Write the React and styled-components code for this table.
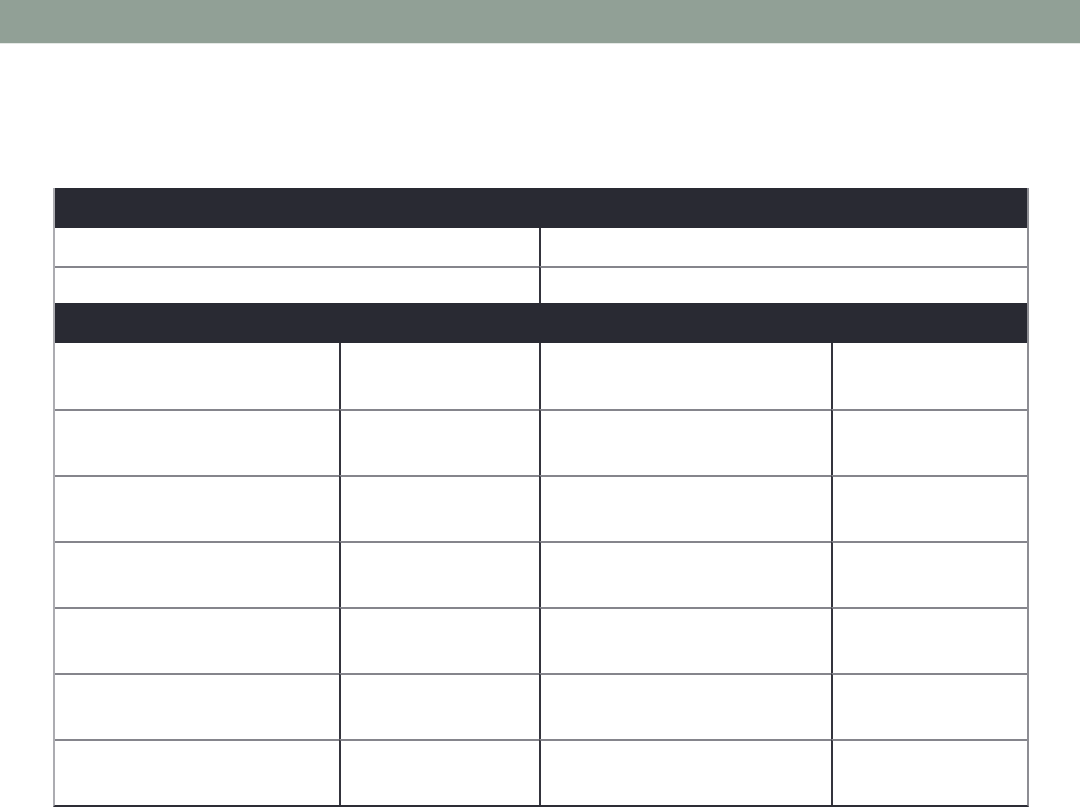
import React from 'react';
import styled, { createGlobalStyle } from 'styled-components';

const GlobalStyle = createGlobalStyle`
  html, body {
    margin: 0;
    padding: 0;
    background: #ffffff;
    font-family: "Liberation Sans", Arial, sans-serif;
  }
`;

const Page = styled.div`
  width: 1080px;
  height: 810px;
  overflow: hidden;
  background: #ffffff;
`;

const TopBar = styled.header`
  height: 43px;
  background: #91a096;
  border-bottom: 1px solid #e4e8e5;
`;

const Sheet = styled.div`
  margin: 144px 0 0 53px;
  width: 976px;
  box-sizing: border-box;
  display: grid;
  grid-template-columns: 284px 200px 292px 196px;
  border-left: 2px solid #acacb1;
  border-right: 2px solid #8d8d93;
  border-bottom: 2px solid #2d2d35;
`;

const Band = styled.div`
  grid-column: 1 / -1;
  height: 40px;
  background: #292a33;
`;

const Cell = styled.div`
  grid-column: span ${p => p.$span || 1};
  height: ${p => p.$h}px;
  box-sizing: border-box;
  border-top: ${p => (p.$top ? '2px solid #85858c' : 'none')};
  border-left: ${p => (p.$first ? 'none' : '2px solid #34343d')};
`;

const infoRows = [38, 37];
const gridRows = 7;

export default function App() {
  return (
    <Page>
      <GlobalStyle />
      <TopBar />
      <Sheet>
        <Band />
        {infoRows.map((h, i) => (
          <React.Fragment key={'info' + i}>
            <Cell $span={2} $h={h} $first $top={i > 0} />
            <Cell $span={2} $h={h} $top={i > 0} />
          </React.Fragment>
        ))}
        <Band />
        {Array.from({ length: gridRows }).map((_, i) => (
          <React.Fragment key={'row' + i}>
            <Cell $h={66} $first $top={i > 0} />
            <Cell $h={66} $top={i > 0} />
            <Cell $h={66} $top={i > 0} />
            <Cell $h={66} $top={i > 0} />
          </React.Fragment>
        ))}
      </Sheet>
    </Page>
  );
}
